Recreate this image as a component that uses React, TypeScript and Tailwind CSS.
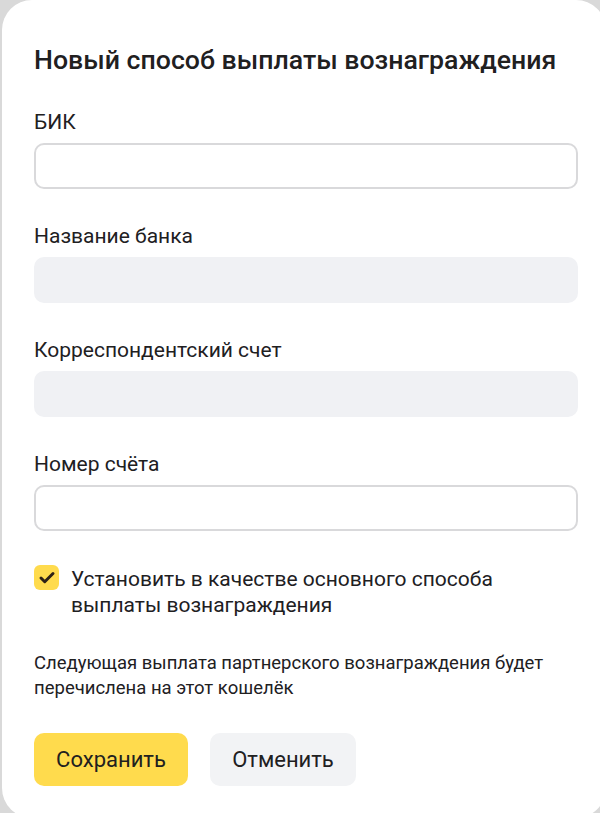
import { Check } from 'lucide-react'

const fields = [
  { label: 'БИК', editable: true },
  { label: 'Название банка', editable: false },
  { label: 'Корреспондентский счет', editable: false },
  { label: 'Номер счёта', editable: true },
]

export default function App() {
  return (
    <div
      className="h-[813px] overflow-hidden bg-[#d9d9d9] text-[#21201f]"
      style={{ fontFamily: 'Roboto, "Noto Sans", Arial, sans-serif' }}
    >
      <div className="ml-[2px] w-[604px] h-[818px] rounded-[30px] bg-white pl-[32px] pt-[44px]">
        <div className="w-[544px]">
          <h1 className="text-[26.7px] leading-[32px] font-medium">Новый способ выплаты вознаграждения</h1>

          {/* Form fields */}
          <div className="mt-[34px] flex flex-col gap-[35px]">
            {fields.map((field) => (
              <div key={field.label}>
                <label className="block text-[21px] leading-[24px] mb-[9px]">{field.label}</label>
                {field.editable ? (
                  <input className="block w-full h-[46px] rounded-[10px] border-2 border-[#d9d9db] bg-white px-3 outline-none" />
                ) : (
                  <div className="h-[46px] rounded-[10px] bg-[#f0f1f4]" />
                )}
              </div>
            ))}
          </div>

          <label className="mt-[35px] flex items-start gap-[12px]">
            <span className="mt-[-1px] flex items-center justify-center w-[25px] h-[25px] shrink-0 rounded-[6px] bg-[#ffdb4d]">
              <Check className="w-[18px] h-[18px] text-[#2e2216]" strokeWidth={4} />
            </span>
            <span className="text-[21px] leading-[26px]">
              Установить в качестве основного способа
              <br />
              выплаты вознаграждения
            </span>
          </label>

          <p className="mt-[33px] text-[18.5px] leading-[25px]">
            Следующая выплата партнерского вознаграждения будет
            <br />
            перечислена на этот кошелёк
          </p>

          <div className="mt-[32px] flex gap-[22px]">
            <button className="h-[53px] w-[154px] rounded-[10px] bg-[#ffdb4d] text-[22px]">Сохранить</button>
            <button className="h-[53px] w-[146px] rounded-[10px] bg-[#f2f3f5] text-[22px]">Отменить</button>
          </div>
        </div>
      </div>
    </div>
  )
}
